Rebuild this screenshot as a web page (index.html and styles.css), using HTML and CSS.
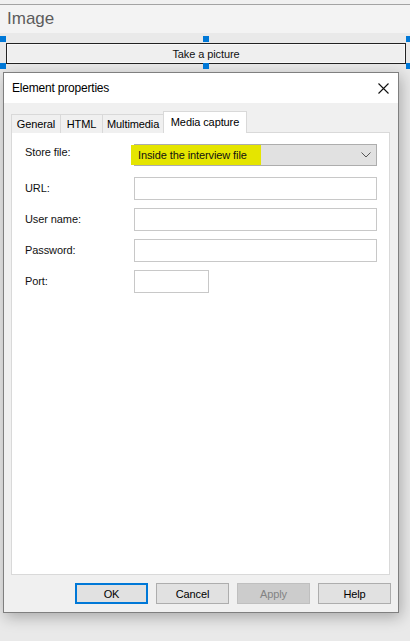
FILE: index.html
```html
<!DOCTYPE html>
<html lang="en">
<head>
<meta charset="UTF-8" />
<meta name="viewport" content="width=device-width, initial-scale=1" />
<title>Element properties</title>
<link rel="stylesheet" href="styles.css">
</head>
<body>
<div class="topstrip"></div>
<div class="page-head">Image</div>

<div class="canvas">
  <div class="selection">
    <span class="handle tl"></span>
    <span class="handle tm"></span>
    <span class="handle tr"></span>
    <span class="handle bl"></span>
    <span class="handle bm"></span>
    <span class="handle br"></span>
    <button class="picture-btn" type="button">Take a picture</button>
  </div>

  <div class="dialog">
    <div class="dialog-title">
      <span>Element properties</span>
      <svg class="close" width="11" height="11" viewBox="0 0 11 11">
        <path d="M0.5 0.5 L10.5 10.5 M10.5 0.5 L0.5 10.5" stroke="#111" stroke-width="1.1" fill="none"/>
      </svg>
    </div>

    <div class="dialog-body">
      <div class="tabs">
        <div class="tab">General</div>
        <div class="tab">HTML</div>
        <div class="tab">Multimedia</div>
        <div class="tab active">Media capture</div>
      </div>

      <div class="panel">
        <form class="fields">
          <label class="store-label" for="storeFile">Store file:</label>
          <div class="select" id="storeFile">
            <span class="hl">Inside the interview file</span>
            <svg class="chev" width="10" height="6" viewBox="0 0 10 6">
              <path d="M0.5 0.5 L5 5 L9.5 0.5" stroke="#555" stroke-width="1" fill="none"/>
            </svg>
          </div>

          <label for="url">URL:</label>
          <input type="text" id="url" />

          <label for="user">User name:</label>
          <input type="text" id="user" />

          <label for="pass">Password:</label>
          <input type="password" id="pass" />

          <label for="port">Port:</label>
          <input type="text" id="port" class="short" />
        </form>
      </div>

      <div class="actions">
        <button type="button" class="btn default">OK</button>
        <button type="button" class="btn">Cancel</button>
        <button type="button" class="btn" disabled>Apply</button>
        <button type="button" class="btn">Help</button>
      </div>
    </div>
  </div>
</div>
</body>
</html>
```

FILE: styles.css
```css
html, body {
  margin: 0;
  padding: 0;
}
body {
  width: 410px;
  height: 641px;
  overflow: hidden;
  background: #eaeaea;
  font-family: "Liberation Sans", Arial, sans-serif;
  font-size: 11px;
  letter-spacing: -0.1px;
  color: #000;
}
.topstrip {
  height: 4px;
  background: #f0f0f0;
  border-bottom: 1px solid #a3a3a3;
}
.page-head {
  height: 28px;
  background: #f3f3f3;
  padding-left: 7px;
  font-size: 17px;
  letter-spacing: 0;
  line-height: 28px;
  color: #5c5c5c;
}
.canvas {
  background: #e9e9e9;
  padding-top: 6px;
  padding-bottom: 28px;
}

.selection {
  position: relative;
  margin-left: 3px;
  width: 406px;
  padding: 4px 3px 2px;
  box-sizing: border-box;
}
.handle {
  position: absolute;
  width: 6px;
  height: 6px;
  background: #0078d7;
}
.handle.tl { left: -3px; top: -3px; }
.handle.tm { left: 200px; top: -3px; }
.handle.tr { right: -3px; top: -3px; }
.handle.bl { left: -3px; bottom: -3px; }
.handle.bm { left: 200px; bottom: -3px; }
.handle.br { right: -3px; bottom: -3px; }
.picture-btn {
  display: block;
  width: 100%;
  height: 21px;
  margin: 0;
  padding: 0;
  background: #efefef;
  border: 1px solid #222;
  box-shadow: inset 0 0 0 1px #f8f8f8;
  font: inherit;
  letter-spacing: inherit;
  color: #111;
}

.dialog {
  margin: 6px 0 0 3px;
  width: 396px;
  height: 541px;
  box-sizing: border-box;
  border: 1px solid #7f7f7f;
  background: #f0f0f0;
  box-shadow: 2px 4px 14px rgba(0, 0, 0, 0.28);
  display: flex;
  flex-direction: column;
}
.dialog-title {
  height: 30px;
  background: #fff;
  display: flex;
  align-items: center;
  justify-content: space-between;
  padding: 0 9px 0 8px;
  font-size: 12px;
  letter-spacing: -0.2px;
}
.close {
  display: block;
}
.dialog-body {
  flex: 1;
  display: flex;
  flex-direction: column;
  padding: 8px 7px 8px 7px;
}

.tabs {
  display: flex;
  align-items: flex-end;
  height: 22px;
  margin-bottom: -1px;
  position: relative;
}
.tab {
  height: 19px;
  box-sizing: border-box;
  padding: 0 4px;
  line-height: 19px;
  background: #f0f0f0;
  border: 1px solid #d9d9d9;
  border-bottom: none;
  margin-right: -1px;
  text-align: center;
  color: #000;
}
.tab:nth-child(1) { width: 50px; }
.tab:nth-child(2) { width: 43px; }
.tab:nth-child(3) { width: 62px; }
.tab.active {
  width: 84px;
  height: 22px;
  line-height: 20px;
  background: #fff;
  position: relative;
  z-index: 1;
}

.panel {
  height: 443px;
  box-sizing: border-box;
  background: #fff;
  border: 1px solid #d9d9d9;
  margin-right: 1px;
  padding: 11px 12px 0 13px;
}
.fields {
  display: grid;
  grid-template-columns: 109px 243px;
  row-gap: 8px;
  align-items: center;
  color: #111;
}
.fields label {
  align-self: center;
  margin-top: -2px;
}
.fields .store-label {
  align-self: start;
  margin-top: 2px;
}
.select {
  position: relative;
  height: 22px;
  box-sizing: border-box;
  border: 1px solid #adadad;
  background: #e1e1e1;
  margin-bottom: 3px;
  display: flex;
  align-items: center;
  justify-content: space-between;
  padding-right: 5px;
}
.select .hl {
  background: #e5e500;
  margin-left: -4px;
  padding: 3px 14px 3px 7px;
  line-height: 14px;
}
.chev {
  display: block;
}
.fields input {
  height: 23px;
  box-sizing: border-box;
  margin: 0;
  border: 1px solid #c8c8c8;
  background: #fff;
  font: inherit;
}
.fields input.short {
  width: 75px;
}

.actions {
  margin-top: auto;
  display: flex;
  justify-content: flex-end;
  gap: 8px;
}
.btn {
  width: 73px;
  height: 21px;
  margin: 0;
  padding: 0;
  box-sizing: border-box;
  background: #e1e1e1;
  border: 1px solid #adadad;
  font: inherit;
  letter-spacing: inherit;
  color: #000;
}
.btn.default {
  border: 2px solid #0078d7;
}
.btn:disabled {
  background: #cccccc;
  border-color: #bfbfbf;
  color: #838383;
}
```
